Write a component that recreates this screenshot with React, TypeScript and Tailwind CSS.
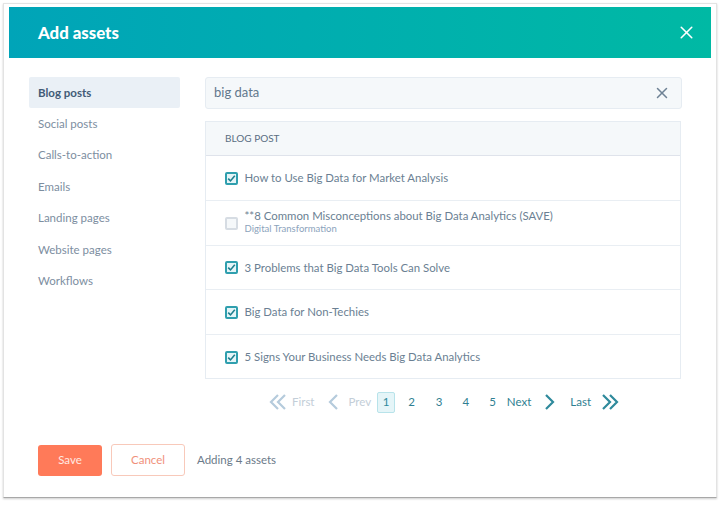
import React from 'react';
import { X } from 'lucide-react';

const navItems = ['Blog posts', 'Social posts', 'Calls-to-action', 'Emails', 'Landing pages', 'Website pages', 'Workflows'];

const posts = [
  { title: 'How to Use Big Data for Market Analysis', checked: true, h: 'h-[45px]' },
  { title: '**8 Common Misconceptions about Big Data Analytics (SAVE)', sub: 'Digital Transformation', checked: false, h: 'h-[45px]' },
  { title: '3 Problems that Big Data Tools Can Solve', checked: true, h: 'h-[44px]' },
  { title: 'Big Data for Non-Techies', checked: true, h: 'h-[45px]' },
  { title: '5 Signs Your Business Needs Big Data Analytics', checked: true, h: 'h-[43px] pt-[1px]' },
];

const Checkbox = ({ checked }: { checked: boolean }) =>
  checked ? (
    <span className="w-[13px] h-[13px] rounded-[2px] border-2 border-[#2f9fae] bg-[#e5f5f8] flex items-center justify-center shrink-0">
      <svg width="9" height="9" viewBox="0 0 9 9" fill="none">
        <path d="M1.2 4.6 L3.5 6.9 L7.8 1.8" stroke="#1f7f8e" strokeWidth="1.6" />
      </svg>
    </span>
  ) : (
    <span className="w-[13px] h-[13px] rounded-[2px] border-2 border-[#d6dce3] bg-[#f5f8fa] shrink-0" />
  );

const Chevron = ({ double, left, color }: { double?: boolean; left?: boolean; color: string }) => (
  <svg width={double ? 18 : 11} height="18" viewBox={double ? '0 0 18 18' : '0 0 11 18'} fill="none" className={left ? 'rotate-180' : ''}>
    <path d="M2 2 L9 9 L2 16" stroke={color} strokeWidth="2.2" />
    {double && <path d="M9 2 L16 9 L9 16" stroke={color} strokeWidth="2.2" />}
  </svg>
);

export default function App() {
  return (
    <div className="w-[720px] h-[505px] bg-white pt-[3px] pl-[3px] overflow-hidden font-['Lato',sans-serif] text-[#516f90]">
      <div className="w-[714px] h-[495px] border border-[#e3e3e3] border-b-[#a8a8a8] shadow-[0_1px_2px_rgba(0,0,0,0.2)] pt-[3px] px-[5px] bg-white">
        <div className="h-[51px] bg-gradient-to-r from-[#00a4b8] to-[#00b9a4] flex items-center justify-between pl-[29px] pr-[15px]">
          <h1 className="text-white text-[16.8px] font-black">Add assets</h1>
          <X size={21} color="#ffffff" strokeWidth={1.8} className="-mr-[1px]" />
        </div>

        <div className="flex pt-[19px] pl-[20px]">
          <nav className="w-[151px] shrink-0">
            {navItems.map((item, i) => (
              <div
                key={item}
                className={`h-[31.4px] pl-[9px] pb-[1px] flex items-center text-[11.5px] rounded-[2px] ${
                  i === 0 ? 'bg-[#eaf0f6] font-bold text-[#425b76]' : 'text-[#7d8e9f]'
                }`}
              >
                {item}
              </div>
            ))}
          </nav>

          <div className="ml-[25px] w-[477px]">
            <div className="h-[32px] bg-[#f5f8fa] border border-[#e6ecf2] rounded-[3px] flex items-center justify-between pl-[8px] pr-[10px] text-[13px] text-[#62778c]">
              <span>big data</span>
              <X size={18} color="#6f8295" strokeWidth={2} />
            </div>

            <div className="mt-[12px] w-[476px] border border-[#e6ecf2]">
              <div className="h-[34px] bg-[#f5f8fa] border-b border-[#dfe3eb] flex items-center pl-[19px] text-[10px] text-[#5a6e82]">
                BLOG POST
              </div>
              {posts.map((post, i) => (
                <div
                  key={post.title}
                  className={`${post.h} flex items-center pl-[19px] gap-[6.5px] ${i < posts.length - 1 ? 'border-b border-[#e9eef3]' : ''}`}
                >
                  <Checkbox checked={post.checked} />
                  <div className={`leading-none ${post.sub ? 'pb-[2px]' : ''}`}>
                    <div className="text-[11.4px] text-[#6b7f93]">{post.title}</div>
                    {post.sub && <div className="text-[9.5px] text-[#8ba3bc] mt-[3px]">{post.sub}</div>}
                  </div>
                </div>
              ))}
            </div>

            <div className="mt-[13px] ml-[64px] h-[20px] flex items-center text-[11.5px]">
              <Chevron double left color="#b5cbdc" />
              <span className="ml-[5px] text-[#c3ced8]">First</span>
              <span className="ml-[13px]"><Chevron left color="#b5cbdc" /></span>
              <span className="ml-[10px] text-[#c3ced8]">Prev</span>
              <span className="ml-[6px] w-[18px] h-[21px] flex items-center justify-center bg-[#e5f5f8] border border-[#b8e3ea] rounded-[2px] text-[#2f8a9c]">1</span>
              <span className="ml-[13px] text-[#2f7f92]">2</span>
              <span className="ml-[21px] text-[#2f7f92]">3</span>
              <span className="ml-[20px] text-[#2f7f92]">4</span>
              <span className="ml-[20px] text-[#2f7f92]">5</span>
              <span className="ml-[11px] text-[#2f7f92]">Next</span>
              <span className="ml-[13px]"><Chevron color="#2f8a9c" /></span>
              <span className="ml-[15px] text-[#2f7f92]">Last</span>
              <span className="ml-[10px]"><Chevron double color="#2f8a9c" /></span>
            </div>
          </div>
        </div>

        <div className="mt-[32px] ml-[29px] flex items-center text-[11.5px]">
          <button className="w-[64px] h-[31px] bg-[#ff7a59] text-[#ffe9e2] rounded-[3px]">Save</button>
          <button className="ml-[9px] w-[74px] h-[32px] bg-white border border-[#f8c9ba] text-[#f0907a] rounded-[3px]">Cancel</button>
          <span className="ml-[12px] text-[#6b7a89]">Adding 4 assets</span>
        </div>
      </div>
    </div>
  );
}
